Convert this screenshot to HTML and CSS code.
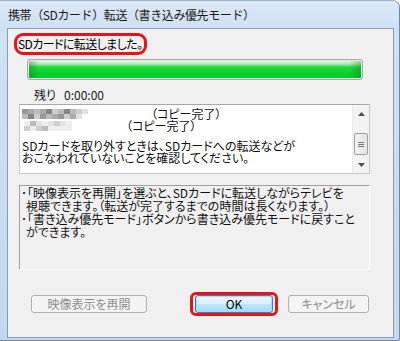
FILE: index.html
```html
<!DOCTYPE html>
<html lang="ja">
<head>
<meta charset="utf-8">
<link rel="stylesheet" href="styles.css">
</head>
<body>
<div class="window">
  <div class="titlebar">携帯（SDカード）転送（書き込み優先モード）</div>
  <div class="client">
    <div class="status">SDカードに転送しました。</div>
    <div class="progress"><div class="fill"></div></div>
    <div class="remain"><span class="rlabel">残り</span><span>0:00:00</span></div>
    <div class="listbox">
      <div class="listtext">
        <div class="line">
          <span class="mosaic m-long">
            <i class="a"></i><i class="b"></i><i class="c"></i><i class="d"></i><i class="b"></i><i class="e"></i><i class="c"></i><i class="a"></i><i class="d"></i><i class="b"></i><i class="e"></i><i class="c"></i><i class="b"></i><i class="a"></i><i class="d"></i><i class="e"></i><i class="b"></i><i class="c"></i><i class="e"></i><i class="f"></i><i class="f"></i>
          </span>
          <span>（コピー完了）</span>
        </div>
        <div class="line">
          <span class="mosaic m-short">
            <i class="f"></i><i class="c"></i><i class="d"></i><i class="f"></i><i class="e"></i><i class="c"></i><i class="f"></i><i class="d"></i><i class="e"></i><i class="f"></i><i class="c"></i><i class="f"></i><i class="e"></i><i class="f"></i><i class="f"></i><i class="f"></i>
          </span>
          <span>（コピー完了）</span>
        </div>
        <div class="line gap">SDカードを取り外すときは、SDカードへの転送などが</div>
        <div class="line">おこなわれていないことを確認してください。</div>
      </div>
      <div class="scrollbar">
        <div class="arrow up"><svg width="7" height="4" viewBox="0 0 7 4"><path d="M3.5 0 L7 4 L0 4 Z" fill="#4d4d4d"/></svg></div>
        <div class="track">
          <div class="thumb"><span></span><span></span><span></span></div>
        </div>
        <div class="arrow down"><svg width="7" height="4" viewBox="0 0 7 4"><path d="M0 0 L7 0 L3.5 4 Z" fill="#4d4d4d"/></svg></div>
      </div>
    </div>
    <div class="info">
      <div class="iline">･「映像表示を再開」を選ぶと、SDカードに転送しながらテレビを</div>
      <div class="iline indent">視聴できます。（転送が完了するまでの時間は長くなります。）</div>
      <div class="iline">･「書き込み優先モード」ボタンから書き込み優先モードに戻すこと</div>
      <div class="iline indent">ができます。</div>
    </div>
    <div class="buttons">
      <button class="btn disabled resume">映像表示を再開</button>
      <div class="okwrap"><button class="btn default ok">OK</button></div>
      <button class="btn disabled cancel">キャンセル</button>
    </div>
  </div>
</div>
</body>
</html>
```

FILE: styles.css
```css
* { box-sizing: border-box; }
html, body { margin: 0; padding: 0; }
body {
  width: 400px;
  height: 341px;
  overflow: hidden;
  font-family: "Noto Sans CJK JP", "Liberation Sans", sans-serif;
  font-size: 12px;
  font-feature-settings: "palt";
  color: #000;
}
.window {
  width: 400px;
  height: 341px;
  display: flex;
  flex-direction: column;
  padding: 0 5px 2px 7px;
  background: linear-gradient(to bottom, #dbe8f6 0px, #cfe1f4 28px, #c3d8ee 100%);
  border-top: 1px solid #9fb4cc;
  border-right: 1px solid #6e87a3;
  border-bottom: 1px solid #6e87a3;
  border-top-right-radius: 7px;
  border-bottom-right-radius: 2px;
}
.titlebar {
  height: 27px;
  line-height: 27px;
  padding-left: 1px;
  color: #1a1a1a;
  white-space: nowrap;
  font-feature-settings: normal;
  letter-spacing: -0.4px;
}
.client {
  flex: 1;
  background: #f0f0f0;
  border: 1px solid #8c9bb0;
  display: flex;
  flex-direction: column;
  align-items: flex-start;
}
.status {
  margin: 4px 0 0 6px;
  height: 22px;
  line-height: 16px;
  border: 3px solid #e8141b;
  border-radius: 9px;
  padding: 0 2px 0 1px;
  white-space: nowrap;
  letter-spacing: -0.6px;
}
.progress {
  margin: 4px 0 0 19px;
  width: 336px;
  height: 21px;
  border: 1px solid #a9a9a9;
  border-radius: 3px;
  background: #e6e6e6;
  padding: 1px;
}
.fill {
  width: 100%;
  height: 100%;
  border-radius: 1px;
  background:
    linear-gradient(to right, rgba(0,90,20,0.3) 0px, rgba(0,90,20,0) 10px, rgba(0,90,20,0) calc(100% - 12px), rgba(0,90,20,0.3) 100%),
    linear-gradient(to bottom, #d8f8da 0px, #bdf2c2 2px, #7fe68c 4px, #22d73e 6px, #06d22c 12px, #04cc29 100%);
}
.remain {
  margin: 8px 0 0 26px;
  height: 14px;
  line-height: 14px;
  display: flex;
  gap: 8px;
  color: #1a1a1a;
}
.listbox {
  margin: 2px 0 0 11px;
  width: 351px;
  height: 70px;
  background: #fff;
  border: 1px solid #c5c8cf;
  border-top-color: #a5a8b0;
  display: flex;
}
.listtext {
  flex: 1;
  padding: 3px 0 0 2px;
  overflow: hidden;
}
.line {
  height: 12px;
  line-height: 12px;
  white-space: nowrap;
  display: flex;
  align-items: center;
  color: #111;
}
.line.gap { margin-top: 8px; }
.mosaic {
  display: inline-grid;
  grid-template-rows: 5px 5px;
  grid-auto-flow: column;
  height: 10px;
  opacity: 0.9;
}
.m-long { grid-auto-columns: 6px; width: 128px; margin-right: 1px; }
.m-short { grid-auto-columns: 6px; width: 96px; margin-left: 2px; margin-right: 6px; opacity: 0.5; }
.mosaic i { display: block; }
.mosaic .a { background: #8d8d8d; }
.mosaic .b { background: #b4b4b4; }
.mosaic .c { background: #a1a1a1; }
.mosaic .d { background: #7a7a7a; }
.mosaic .e { background: #c9c9c9; }
.mosaic .f { background: #dedede; }
.scrollbar {
  width: 17px;
  display: flex;
  flex-direction: column;
  background: #f3f3f3;
  border-left: 1px solid #ededed;
}
.arrow {
  height: 17px;
  display: flex;
  align-items: center;
  justify-content: center;
}
.track {
  flex: 1;
  display: flex;
  flex-direction: column;
  padding-top: 11px;
}
.thumb {
  margin: 0 1px;
  height: 22px;
  border: 1px solid #a0a0a0;
  border-radius: 2px;
  background: linear-gradient(to right, #f2f2f2, #e4e4e4);
  display: flex;
  flex-direction: column;
  align-items: center;
  justify-content: center;
  gap: 1px;
}
.thumb span {
  width: 6px;
  height: 1px;
  background: #777;
}
.info {
  margin: 11px 0 0 11px;
  width: 351px;
  height: 85px;
  border-top: 1px solid #a0a0a0;
  border-left: 1px solid #a0a0a0;
  border-right: 1px solid #ffffff;
  border-bottom: 1px solid #ffffff;
  padding: 0 0 0 1px;
}
.iline {
  height: 13px;
  line-height: 13px;
  white-space: nowrap;
  color: #111;
}
.iline.indent { padding-left: 5px; }
.buttons {
  margin-top: 22px;
  display: flex;
  align-items: center;
}
.btn {
  font-family: inherit;
  font-size: 12px;
  font-feature-settings: "palt";
  height: 18px;
  padding: 0;
  line-height: 16px;
  border-radius: 3px;
}
.btn.disabled {
  border: 1px solid #adb2b5;
  background: #f4f4f4;
  color: #8d8d8d;
}
.resume { margin-left: 23px; width: 116px; }
.okwrap {
  margin-left: 43px;
  width: 88px;
  height: 24px;
  border: 3px solid #e8141b;
  border-radius: 6px;
  padding: 0 2px;
  display: flex;
  align-items: center;
}
.btn.default {
  width: 78px;
  border: 1px solid #3c7fb1;
  background: linear-gradient(to bottom, #eaf6fd 0%, #d9f0fc 50%, #bee6fd 51%, #a7d9f5 100%);
  color: #000;
  box-shadow: inset 0 0 0 1px #9ee0fb;
}
.cancel { margin-left: 10px; width: 81px; }
```
